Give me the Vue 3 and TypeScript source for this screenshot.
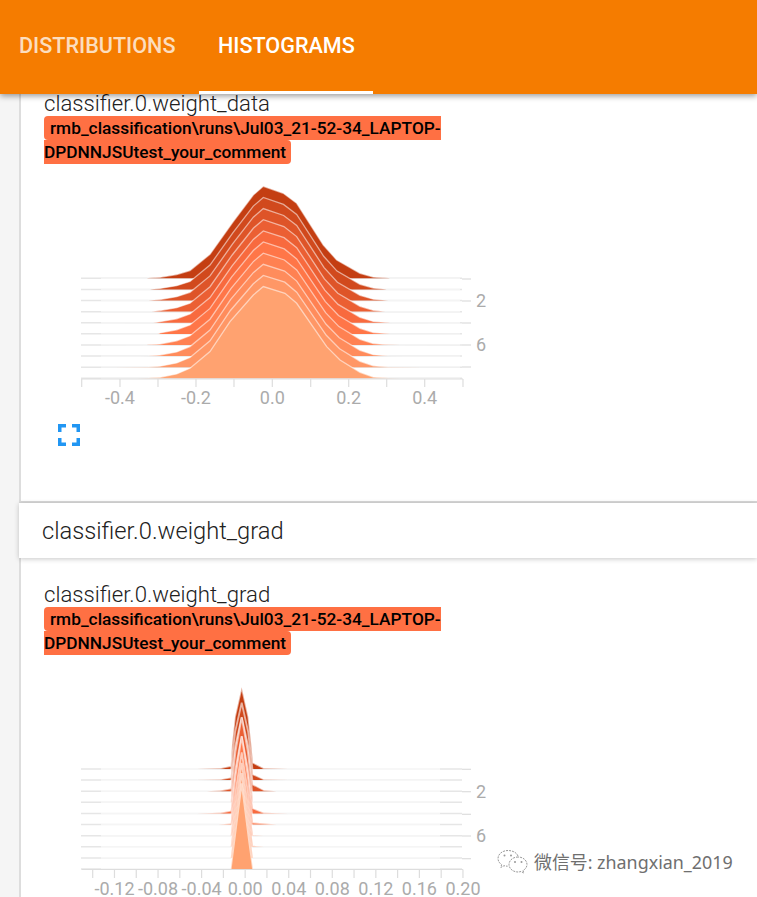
<script setup lang="ts">
type Pt = [number, number];

const dark = [196, 62, 18];
const mid = [255, 112, 67];
const light = [255, 162, 112];

function layerColor(i: number, n: number): string {
  const t = i / (n - 1);
  const mix = (a: number[], b: number[], k: number) =>
    a.map((v, c) => Math.round(v + (b[c] - v) * k));
  const c = t < 0.5 ? mix(dark, mid, t * 2) : mix(mid, light, (t - 0.5) * 2);
  return `rgb(${c[0]},${c[1]},${c[2]})`;
}

interface Layer {
  area: string;
  line: string;
  base: number;
  fill: string;
}

function toLayer(points: Pt[], base: number, fill: string, x0: number, x1: number): Layer {
  const pts = points.map(([z, h]) => `${(70 + z / 3).toFixed(1)},${(base - h / 3).toFixed(1)}`);
  return {
    area: `M${pts.join('L')}Z`,
    line: `M${x0},${base}L${pts.join('L')}L${x1},${base}`,
    base,
    fill,
  };
}

const topShape: Pt[] = [[270, 3], [320, 11], [360, 23], [420, 72], [490, 170], [550, 250], [580, 276], [640, 255], [680, 225], [760, 100], [800, 55], [870, 15], [910, 4]];
const botShape: Pt[] = [[270, 3], [320, 13], [360, 30], [420, 80], [480, 170], [550, 250], [580, 275], [645, 255], [680, 225], [770, 95], [810, 55], [870, 18], [910, 4]];
const tails1: Pt[] = [[230, 960], [240, 950], [170, 1060], [240, 950], [250, 960], [262, 960], [230, 990], [210, 1000], [130, 1060], [200, 990]];

const layers1: Layer[] = tails1.map(([l, r], i) => {
  const k = i / 9;
  const body = topShape.map(([x, h], j): Pt => [
    x + (botShape[j][0] - x) * k,
    h + (botShape[j][1] - h) * k,
  ]);
  return toLayer([[l, 0], [Math.max(l + 4, 235), 0.5], ...body, [Math.min(r - 4, 955), 0.5], [r, 0]], 278.3 + i * 11.11, layerColor(i, 10), 101, 460);
});

interface Spike { peak: number; left: Pt[]; right: Pt[] }
const spikes: Spike[] = [
  { peak: 245, left: [[380, 0], [450, 2], [482, 9]], right: [[549, 19], [582, 2], [655, 0]] },
  { peak: 232, left: [[380, 0], [450, 2], [482, 8]], right: [[549, 17], [582, 2], [655, 0]] },
  { peak: 222, left: [[410, 0], [450, 2], [482, 8]], right: [[549, 20], [582, 3], [620, 0]] },
  { peak: 255, left: [[482, 0]], right: [[549, 0]] },
  { peak: 232, left: [[380, 0], [450, 2], [482, 8]], right: [[549, 15], [582, 2], [655, 0]] },
  { peak: 264, left: [[445, 0], [482, 3]], right: [[549, 6], [620, 0]] },
  { peak: 250, left: [[482, 0]], right: [[549, 1], [580, 0]] },
  { peak: 252, left: [[482, 0]], right: [[549, 3], [582, 0]] },
  { peak: 254, left: [[482, 0]], right: [[549, 0]] },
  { peak: 257, left: [[482, 0]], right: [[549, 0]] },
];

const layers2: Layer[] = spikes.map((s, i) => {
  // Upper layers bulge outward; the lowest layer is a plain triangle.
  const bulge = (9 - i) / 9;
  const hw1 = 16.5 + (20 - 16.5) * bulge;
  const hw2 = 23.1 + (29 - 23.1) * bulge;
  const hull: Pt[] = [
    [515 - hw2, s.peak * 0.3],
    [515 - hw1, s.peak * 0.5 + 0.14 * s.peak * bulge],
    [515, s.peak],
    [515 + hw1, s.peak * 0.5 + 0.14 * s.peak * bulge],
    [515 + hw2, s.peak * 0.3],
  ];
  return toLayer([...s.left, ...hull, ...s.right], 769 + i * 11.11, layerColor(i, 10), 101, 440);
});

const ticks1 = [81.7, 120, 158, 196, 234, 272.3, 310.7, 348.7, 386.7, 424.7, 463];
const labels1 = [
  { x: 120, t: '-0.4' },
  { x: 196, t: '-0.2' },
  { x: 272.3, t: '0.0' },
  { x: 348.7, t: '0.2' },
  { x: 424.7, t: '0.4' },
];
const yticks1 = [279, 301, 323, 345, 367];

const ticks2 = Array.from({ length: 18 }, (_, i) => 92.7 + i * 21.78);
const labels2 = ['-0.12', '-0.08', '-0.04', '0.00', '0.04', '0.08', '0.12', '0.16', '0.20'].map((t, i) => ({
  x: 114.5 + i * 43.56,
  t,
}));
const yticks2 = [769.3, 791.7, 814.3, 836, 858.7];
</script>

<template>
  <div class="page">
    <header class="bar">
      <div class="tab dim">DISTRIBUTIONS</div>
      <div class="tab active">HISTOGRAMS</div>
    </header>

    <section class="card first">
      <div class="name">classifier.0.weight_data</div>
      <div class="tag"><span>rmb_classification\runs\Jul03_21-52-34_LAPTOP-DPDNNJSUtest_your_comment</span></div>
      <svg class="chart" width="450" height="246" viewBox="44 164 450 246">
        <line v-for="l in layers1" :key="'b' + l.base" class="baseline" x1="81" x2="462" :y1="l.base" :y2="l.base" />
        <g v-for="l in layers1" :key="l.base">
          <path :d="l.area" :fill="l.fill" />
          <path :d="l.line" class="outline" />
        </g>
        <line class="axis" x1="81.7" x2="463" y1="379" y2="379" />
        <line v-for="t in ticks1" :key="t" class="axis" :x1="t" :x2="t" y1="379" y2="387" />
        <line v-for="t in yticks1" :key="t" class="axis" x1="462" x2="471" :y1="t" :y2="t" />
        <text v-for="l in labels1" :key="l.t" class="label" :x="l.x" y="404" text-anchor="middle">{{ l.t }}</text>
        <text class="label" x="476" y="307">2</text>
        <text class="label" x="476" y="351">6</text>
      </svg>
      <button class="expand" aria-label="Fit to screen">
        <svg width="22" height="22" viewBox="0 0 22 22">
          <path d="M1.750 8V1.750H8M14 1.750h6.250V8M20.250 14v6.250H14M8 20.250H1.750V14" class="frame" />
        </svg>
      </button>
    </section>

    <div class="group-head">classifier.0.weight_grad</div>

    <section class="card second">
      <div class="name">classifier.0.weight_grad</div>
      <div class="tag"><span>rmb_classification\runs\Jul03_21-52-34_LAPTOP-DPDNNJSUtest_your_comment</span></div>
      <svg class="chart spiked" width="450" height="242" viewBox="44 655 450 242">
        <line v-for="l in layers2" :key="'b' + l.base" class="baseline" x1="81" x2="462" :y1="l.base" :y2="l.base" />
        <g v-for="l in layers2" :key="l.base">
          <path :d="l.area" :fill="l.fill" />
          <path :d="l.line" class="outline" />
        </g>
        <line class="axis" x1="81.7" x2="463" y1="869.5" y2="869.5" />
        <line v-for="t in ticks2" :key="t" class="axis" :x1="t" :x2="t" y1="869.5" y2="878" />
        <line v-for="t in yticks2" :key="t" class="axis" x1="462" x2="471" :y1="t" :y2="t" />
        <text v-for="l in labels2" :key="l.t" class="label" :x="l.x" y="895" text-anchor="middle">{{ l.t }}</text>
        <text class="label" x="476" y="798">2</text>
        <text class="label" x="476" y="842">6</text>
      </svg>
    </section>

    <div class="mark">
      <svg width="32" height="27" viewBox="0 0 32 27">
        <path class="wc" d="M11 1.500C5.500 1.500 1 5 1 9.500c0 2.600 1.400 4.600 3.600 6.100L3.800 18.400l3.200-1.700c1.200.3 2.400.5 3.600.5" />
        <path class="wc open" d="M21 7C19.900 3.700 15.500 1.500 11 1.500" />
        <path class="wc" d="M21 8c-4.800 0-9 3.200-9 7.500s4.200 7.500 9 7.500c1 0 2-.2 3-.5l2.800 1.500-.8-2.500c2.500-1.400 4-3.500 4-6 0-4.300-4.200-7.500-9-7.500z" />
        <circle class="wd" cx="7.500" cy="6.500" r="1" />
        <circle class="wd" cx="14" cy="6.500" r="1" />
        <circle class="wd" cx="18" cy="13" r="1" />
        <circle class="wd" cx="24.500" cy="13" r="1" />
      </svg>
      <span>微信号: zhangxian_2019</span>
    </div>
  </div>
</template>

<style>
html, body { margin: 0; background: #fff; }
</style>

<style scoped>
.page {
  position: relative;
  width: 757px;
  height: 897px;
  overflow: hidden;
  background: #f5f5f5;
  font-family: Roboto, "Liberation Sans", sans-serif;
}
.bar {
  position: relative;
  z-index: 2;
  display: flex;
  height: 94px;
  background: #f57c00;
  box-shadow: 0 2px 6px rgba(0, 0, 0, 0.4);
}
.tab {
  box-sizing: border-box;
  height: 94px;
  padding-top: 33px;
  font-size: 21.600px;
  font-weight: 500;
  line-height: 26px;
  color: #fff;
}
.dim {
  width: 199px;
  padding-left: 19px;
  color: rgba(255, 255, 255, 0.75);
}
.active {
  width: 174px;
  padding-left: 19px;
  border-bottom: 3px solid #fff;
}
.card {
  box-sizing: border-box;
  margin-left: 19px;
  padding-left: 23px;
  background: #fff;
  border-left: 2px solid #ddd;
  color: #212121;
}
.first {
  height: 411px;
  border-bottom: 2px solid #d8d8d8;
}
.second {
  height: 339px;
  padding-top: 27px;
}
.name {
  margin-top: -2px;
  height: 25px;
  font-size: 22.200px;
  font-weight: 300;
  line-height: 23px;
  white-space: nowrap;
}
.tag {
  width: 405px;
  font-size: 17.300px;
  font-weight: 500;
  line-height: 23.500px;
  color: #000;
}
.tag span {
  background: #ff7043;
  border-radius: 4px;
  padding: 2px 5px 2px 6px;
}
.chart { display: block; }
.baseline {
  stroke: #e6e6e6;
  stroke-width: 1.5;
}
.outline {
  fill: none;
  stroke: rgba(255, 255, 255, 0.55);
  stroke-width: 1.3;
}
.spiked .outline {
  stroke: rgba(255, 255, 255, 0.6);
  stroke-width: 1.8;
}
.axis {
  stroke: #ddd;
  stroke-width: 1.2;
}
.label {
  font-family: Roboto, "Liberation Sans", sans-serif;
  font-size: 18px;
  font-weight: 400;
  fill: #ababab;
}
.expand {
  display: block;
  margin: 13.500px 0 0 13.500px;
  padding: 0;
  border: 0;
  background: none;
  width: 22px;
  height: 22px;
}
.expand svg { display: block; }
.frame {
  fill: none;
  stroke: #2196f3;
  stroke-width: 3.500;
}
.group-head {
  position: relative;
  z-index: 1;
  box-sizing: border-box;
  height: 55px;
  margin-left: 19px;
  padding-left: 23px;
  background: #fff;
  box-shadow: 0 1px 5px rgba(0, 0, 0, 0.22);
  font-size: 23.700px;
  font-weight: 300;
  line-height: 56px;
  color: #212121;
}
.mark {
  position: absolute;
  left: 497px;
  top: 849px;
  display: flex;
  align-items: center;
  gap: 5px;
  color: #6f6f6f;
  font-family: "Noto Sans", "Noto Sans CJK SC", sans-serif;
  font-size: 17.900px;
  line-height: 27px;
  text-shadow: 0 0 2px #fff, 0 0 2px #fff;
}
.wc { fill: #fff; stroke: #999; stroke-width: 1; stroke-dasharray: 2 1; }
.wc.open { fill: none; }
.wd { fill: #999; }
</style>
